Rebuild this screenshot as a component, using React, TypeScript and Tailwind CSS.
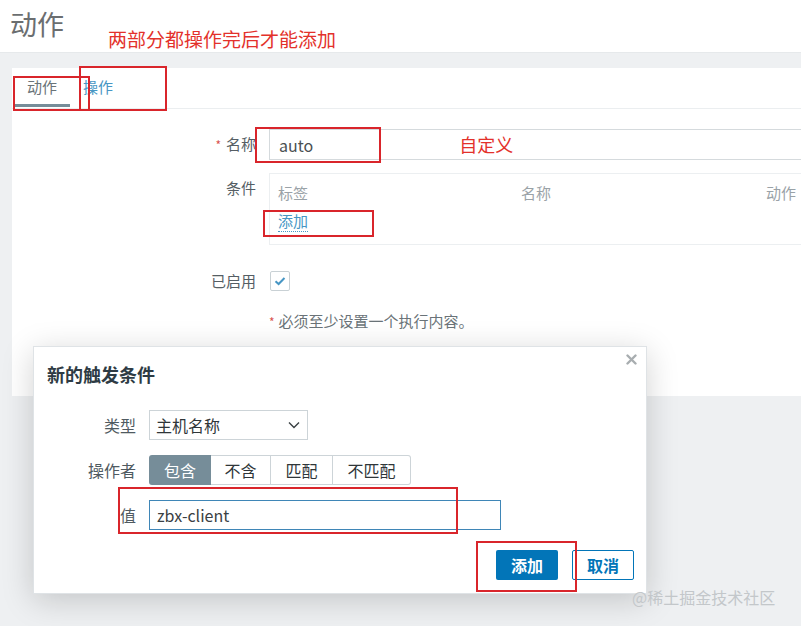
import React from "react";

const font = { fontFamily: '"Noto Sans CJK SC", "Noto Sans", Arial, sans-serif' } as const;

function RedBox({ l, t, w, h }: { l: number; t: number; w: number; h: number }) {
  return (
    <div
      className="absolute border-2 border-[#d9252b] pointer-events-none"
      style={{ left: l, top: t, width: w, height: h }}
    />
  );
}

export default function App() {
  return (
    <div className="relative w-[801px] h-[626px] overflow-hidden bg-[#eef0f2] text-[15px] text-[#555e64]" style={font}>
      {/* header */}
      <div className="h-[53px] bg-white border-b border-[#e6e9eb] flex items-start">
        <div className="pl-[10px] pt-[6px] text-[27px] leading-[36px] text-[#6b6e70]">动作</div>
        <div className="pl-[44px] pt-[26px] text-[19px] leading-[26px] text-[#e3312b]">两部分都操作完后才能添加</div>
      </div>

      {/* main panel */}
      <div className="pt-[15px] pl-[12px]">
        <div className="bg-white h-[328px]">
          {/* tabs */}
          <div className="h-[41px] border-b border-[#ebeef0] flex items-end pl-[2px]">
            <div className="w-[56px] h-full flex flex-col justify-between items-center">
              <span className="pt-[8px] text-[#6a7378] leading-[22px]">动作</span>
              <span className="h-[3px] w-full bg-[#768d99] mb-[1px]" />
            </div>
            <div className="px-[13px] h-full pt-[8px] leading-[22px] text-[#4796c4]">操作</div>
          </div>

          {/* form */}
          <div className="pt-[20px] flex flex-col">
            <div className="flex items-center h-[31px]">
              <div className="w-[244px] text-right">
                <span className="text-[#d9534f] mr-[5px] text-[12px]">*</span>名称
              </div>
              <div className="ml-[13px] flex-1 h-[31px] border border-[#d5dadd] border-r-0 flex items-center pl-[9px] text-[16px] text-[#4a4f52]">
                auto
                <span className="ml-[146px] text-[18px] text-[#e3312b]">自定义</span>
              </div>
            </div>

            <div className="flex mt-[13px]">
              <div className="w-[244px] text-right pt-[4px] leading-[22px]">条件</div>
              <div className="ml-[13px] flex-1 h-[72px] border border-[#eceff1] border-r-0 pl-[8px] pt-[8px]">
                <div className="flex text-[#9aa2a7] leading-[22px]">
                  <span className="w-[243px]">标签</span>
                  <span className="w-[245px]">名称</span>
                  <span>动作</span>
                </div>
                <div className="mt-[6px] leading-[22px]">
                  <span className="text-[#4796c4] border-b border-dotted border-[#4796c4]">添加</span>
                </div>
              </div>
            </div>

            <div className="flex items-center mt-[26px] h-[20px]">
              <div className="w-[244px] text-right">已启用</div>
              <div className="ml-[14px] w-[20px] h-[20px] border border-[#c9d1d5] rounded-[2px] flex items-center justify-center">
                <svg width="14" height="14" viewBox="0 0 14 14">
                  <path d="M2.5 7.2 L5.6 10 L11.5 4" fill="none" stroke="#4796c4" strokeWidth="2" />
                </svg>
              </div>
            </div>

            <div className="mt-[20px] ml-[257px] leading-[20px] text-[#6a7378]">
              <span className="text-[#d9534f] text-[12px] mr-[4px]">*</span>必须至少设置一个执行内容。
            </div>
          </div>
        </div>
      </div>

      {/* dialog */}
      <div className="absolute left-[33px] top-[346px] w-[614px] h-[248px] bg-white border border-[#dfe3e6] shadow-[0_6px_30px_rgba(0,0,0,0.18)] text-[16px]">
        <div className="relative">
          <div className="pl-[13px] pt-[13px] text-[18px] leading-[28px] font-bold text-[#2e3b44]">新的触发条件</div>
          <svg className="absolute right-[9px] top-[7px]" width="11" height="11" viewBox="0 0 11 11">
            <path d="M1.5 1.5 L9.5 9.5 M9.5 1.5 L1.5 9.5" stroke="#a8adb0" strokeWidth="2.4" strokeLinecap="round" />
          </svg>
        </div>

        <div className="mt-[22px] flex flex-col gap-[15px]">
          <div className="flex items-center h-[30px]">
            <div className="w-[102px] text-right text-[#4f5a61]">类型</div>
            <div className="ml-[13px] w-[159px] h-[30px] border border-[#cdd4d8] flex items-center justify-between pl-[6px] pr-[5px] text-[#2f3639]">
              <span>主机名称</span>
              <svg width="16" height="16" viewBox="0 0 16 16">
                <path d="M3 5.5 L8 10.5 L13 5.5" fill="none" stroke="#3a4043" strokeWidth="1.4" />
              </svg>
            </div>
          </div>

          <div className="flex items-center h-[30px]">
            <div className="w-[102px] text-right text-[#4f5a61]">操作者</div>
            <div className="ml-[13px] flex h-[30px] text-[#2f3639]">
              <div className="w-[62px] bg-[#768d99] text-white rounded-l-[3px] flex items-center justify-center">包含</div>
              <div className="w-[60px] border-y border-r border-[#cdd4d8] flex items-center justify-center">不含</div>
              <div className="w-[62px] border-y border-r border-[#cdd4d8] flex items-center justify-center">匹配</div>
              <div className="w-[78px] border-y border-r border-[#cdd4d8] rounded-r-[3px] flex items-center justify-center">不匹配</div>
            </div>
          </div>

          <div className="flex items-center h-[30px]">
            <div className="w-[102px] text-right text-[#4f5a61]">值</div>
            <div className="ml-[13px] w-[352px] h-[30px] border border-[#3f86b7] flex items-center pl-[7px] text-[16px] text-[#3a4043]">
              zbx-client
            </div>
          </div>
        </div>

        <div className="mt-[20px] flex justify-end gap-[14px] pr-[12px]">
          <div className="w-[62px] h-[30px] bg-[#0275b8] rounded-[2px] flex items-center justify-center text-white font-bold">添加</div>
          <div className="w-[62px] h-[30px] border border-[#0275b8] rounded-[2px] flex items-center justify-center text-[#0275b8] font-bold">取消</div>
        </div>
      </div>

      {/* watermark */}
      <div className="absolute left-[632px] top-[586px] text-[16px] leading-[22px] text-[#c3c7ca]">@稀土掘金技术社区</div>

      {/* annotation boxes */}
      <RedBox l={13} t={76} w={77} h={35} />
      <RedBox l={79} t={66} w={88} h={45} />
      <RedBox l={255} t={127} w={126} h={36} />
      <RedBox l={263} t={210} w={111} h={27} />
      <RedBox l={118} t={487} w={340} h={47} />
      <RedBox l={476} t={541} w={101} h={51} />
    </div>
  );
}
